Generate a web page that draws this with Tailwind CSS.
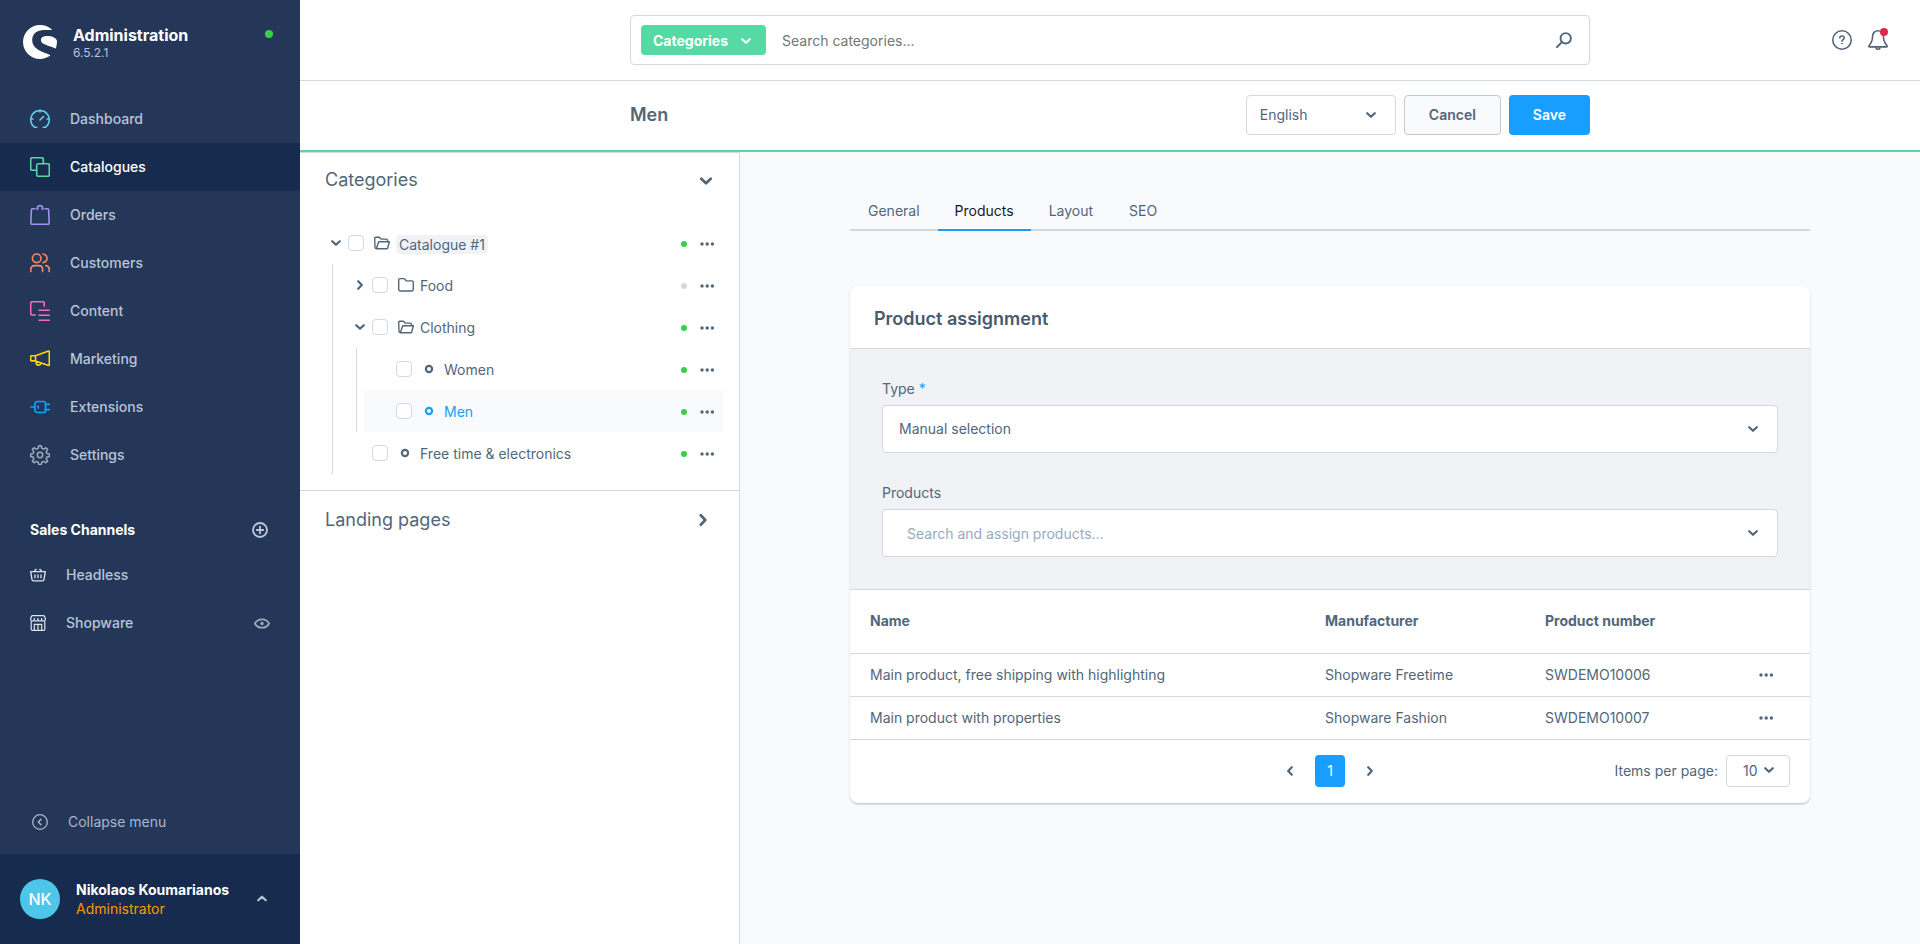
<!DOCTYPE html>
<html lang="en">
<head>
<meta charset="utf-8">
<meta name="viewport" content="width=device-width, initial-scale=1">
<title>Men | Categories | Administration</title>
<script src="https://cdn.jsdelivr.net/npm/@tailwindcss/browser@4"></script>
</head>
<body class="flex h-screen overflow-hidden bg-[#f9fafc] font-['Inter',sans-serif] text-sm text-[#52667a] antialiased">

<svg class="hidden" aria-hidden="true">
  <symbol id="chevron-down" viewBox="0 0 16 16"><path d="M4.200 6.200 8 9.800l3.800-3.600" fill="none" stroke="currentColor" stroke-width="2.200" stroke-linecap="round" stroke-linejoin="round"/></symbol>
  <symbol id="chevron-right" viewBox="0 0 16 16"><path d="M6.200 4.200 9.800 8l-3.600 3.800" fill="none" stroke="currentColor" stroke-width="2.200" stroke-linecap="round" stroke-linejoin="round"/></symbol>
  <symbol id="chevron-left" viewBox="0 0 16 16"><path d="M9.800 4.200 6.200 8l3.600 3.800" fill="none" stroke="currentColor" stroke-width="2.200" stroke-linecap="round" stroke-linejoin="round"/></symbol>
  <symbol id="chevron-up" viewBox="0 0 16 16"><path d="M4.200 9.300 8 5.700l3.800 3.600" fill="none" stroke="currentColor" stroke-width="2.200" stroke-linecap="round" stroke-linejoin="round"/></symbol>
  <symbol id="more" viewBox="0 0 16 16"><g fill="currentColor"><circle cx="3" cy="8" r="1.700"/><circle cx="8.200" cy="8" r="1.700"/><circle cx="13.400" cy="8" r="1.700"/></g></symbol>
  <symbol id="folder" viewBox="0 0 16 16"><path d="M.7 3v9.600c0 .8.600 1.400 1.400 1.400h11.800c.8 0 1.400-.6 1.400-1.400V5.300c0-.8-.6-1.400-1.400-1.400H8.200L6.400 1.600H2.100C1.300 1.600.7 2.200.7 3z" fill="none" stroke="currentColor" stroke-width="1.400" stroke-linejoin="round"/></symbol>
  <symbol id="folder-open" viewBox="0 0 16 16"><path d="M2.300 13.700 4.700 6.800h10.700l-1.700 6.200c-.1.400-.5.700-1 .7H2.300c-.8 0-1.200-.5-1.300-1.200L.7 3.300c0-.6.400-1 1-1h3.600l1.800 1.800h5.200c.7 0 1.200.5 1.200 1.200v1.500" fill="none" stroke="currentColor" stroke-width="1.400" stroke-linejoin="round"/></symbol>
  <symbol id="leaf" viewBox="0 0 16 16"><circle cx="7" cy="8" r="3.100" fill="none" stroke="currentColor" stroke-width="2.200"/></symbol>
</svg>

<aside class="flex w-[300px] shrink-0 flex-col bg-[#243758] text-[#b9c4d8]">
  <div class="flex items-start pt-[25px] pr-[27px] pl-[23px]">
    <svg class="size-[34px]" viewBox="0 0 34 34" fill="#fff" aria-hidden="true">
      <path d="M28.600 4.200C25.500 1.600 21.400 0 17 0 7.600 0 0 7.600 0 17s7.600 17 17 17c3.700 0 7.200-1.200 10-3.200.4-.3.300-.7-.1-.9-6.500-3-17.700-5.300-17.700-14.900C9.200 8.400 14.500 4.900 20.500 4.900c2.700 0 5.300.1 7.900 0 .4 0 .5-.4.200-.7z"/>
      <path d="M33.800 15.200c-1.400-2.600-5.200-4.100-9.600-4.100-4 0-6.300 1.600-6.300 4 0 5 8.400 5.200 14.200 8.300.4.200.6.100.8-.3.900-2.300 1.200-5.400.9-7.900z"/>
    </svg>
    <div class="ml-4 flex-1">
      <div class="text-base leading-5 font-bold text-white">Administration</div>
      <div class="text-xs leading-4">6.5.2.1</div>
    </div>
    <span class="mt-[5px] size-2 rounded-full bg-[#37d046]"></span>
  </div>

  <nav class="mt-[34px] font-medium">
    <a href="#" class="flex h-12 items-center gap-5 pl-[30px]">
      <svg class="size-5 text-[#64cfeb]" viewBox="0 0 20 20" fill="none" stroke="currentColor" stroke-width="1.600" stroke-linecap="round"><path d="M6.700 18.300H4.500A9.300 9.300 0 1 1 15.500 18.300H13.300M10 1v2M1 10h2M17 10h2M10 11l3.500-3.500"/></svg>
      Dashboard</a>
    <a href="#" aria-current="page" class="flex h-12 items-center gap-5 bg-[#172b4e] pl-[30px] text-white">
      <svg class="size-5 text-[#57d9a3]" viewBox="0 0 20 20" fill="none" stroke="currentColor" stroke-width="1.600" stroke-linejoin="round"><rect x="6.700" y="6.700" width="12.600" height="12.600" rx="1.500"/><path d="M6.700 13.300H2.200A1.500 1.500 0 0 1 .7 11.800V2.200A1.500 1.500 0 0 1 2.200.7h9.600a1.500 1.500 0 0 1 1.500 1.500v4.500"/></svg>
      Catalogues</a>
    <a href="#" class="flex h-12 items-center gap-5 pl-[30px]">
      <svg class="size-5 text-[#a092f0]" viewBox="0 0 20 20" fill="none" stroke="currentColor" stroke-width="1.600" stroke-linecap="round" stroke-linejoin="round"><path d="M5 3.700H2.600c-.7 0-1.200.5-1.200 1.100L.8 18c0 .7.500 1.300 1.200 1.300h16c.7 0 1.200-.6 1.200-1.300l-.6-13.200c0-.6-.5-1.100-1.200-1.100H15M7.300 4.500V3.200C7.300 1.700 8.400.7 10 .7s2.700 1 2.700 2.500v1.300M7.300 3.700H8M12 3.700h.7"/></svg>
      Orders</a>
    <a href="#" class="flex h-12 items-center gap-5 pl-[30px]">
      <svg class="size-5 text-[#f88962]" viewBox="0 0 20 20" fill="none" stroke="currentColor" stroke-width="1.600" stroke-linecap="round"><circle cx="6.700" cy="5.300" r="4.300"/><path d="M13 1c2.500.4 4 2.100 4 4.300s-1.500 3.900-4 4.300M.8 18.600v-2.300c0-2.200 1.500-3.700 3.700-3.700h4.400c2.200 0 3.700 1.500 3.700 3.700v2.300M15.800 12.600c2.100.3 3.400 1.700 3.400 3.700v2.300"/></svg>
      Customers</a>
    <a href="#" class="flex h-12 items-center gap-5 pl-[30px]">
      <svg class="size-5 text-[#ff68b4]" viewBox="0 0 20 20" fill="none" stroke="currentColor" stroke-width="1.600" stroke-linecap="round"><path d="M5.200 14H2.200A1.500 1.500 0 0 1 .7 12.500V2.200A1.500 1.500 0 0 1 2.200.7h10.500a1.500 1.500 0 0 1 1.500 1.500v2.900M9 9.200h10.300M9 14.200h10.300M9 19.200h10.300"/></svg>
      Content</a>
    <a href="#" class="flex h-12 items-center gap-5 pl-[30px]">
      <svg class="size-5 text-[#ffd700]" viewBox="0 0 20 20" fill="none" stroke="currentColor" stroke-width="1.600" stroke-linejoin="round"><path d="M5.500 6.700H1.500a.8.800 0 0 0-.8.800v3.600c0 .4.400.8.800.8h4zM5.500 6.700 18.500 2c.4-.1.800.1.800.6v13.300c0 .5-.4.700-.8.600L5.500 11.900M6.200 12.200v1.900c0 1.200.8 2 2.100 2h.5c1.100 0 1.900-.6 2.200-1.700"/></svg>
      Marketing</a>
    <a href="#" class="flex h-12 items-center gap-5 pl-[30px]">
      <svg class="size-5 text-[#189eff]" viewBox="0 0 20 20" fill="none" stroke="currentColor" stroke-width="1.700" stroke-linecap="round" stroke-linejoin="round"><path d="M.8 10h4M15.500 7.300h3.800M15.500 12.700h3.800M8 9v2"/><path d="M7.500 4.500h6.300c1 0 1.700.7 1.700 1.700v7.600c0 1-.7 1.700-1.700 1.700H7.500c-1.600 0-2.700-1.200-2.700-2.700V7.200c0-1.500 1.100-2.700 2.700-2.700z"/></svg>
      Extensions</a>
    <a href="#" class="flex h-12 items-center gap-5 pl-[30px]">
      <svg class="size-5 text-[#9aabbb]" viewBox="0 0 20 20" fill="none" stroke="currentColor" stroke-width="1.500" stroke-linejoin="round"><circle cx="10" cy="10" r="2.700"/><path d="M8.800.8h2.400l.6 2.500 1.900.8 2.200-1.400 1.700 1.700-1.400 2.200.8 1.900 2.400.6v2.300l-2.400.6-.8 1.900 1.400 2.200-1.700 1.700-2.200-1.400-1.900.8-.6 2.400H8.800l-.6-2.400-1.900-.8-2.200 1.400-1.700-1.700 1.400-2.200-.8-1.900-2.300-.6V9.100L3 8.500l.8-1.900-1.400-2.200 1.700-1.700 2.200 1.400 1.900-.8z"/></svg>
      Settings</a>
  </nav>

  <div class="mt-[33px] mb-[3px] flex h-9 items-center justify-between pr-8 pl-[30px]">
    <h2 class="font-bold text-white">Sales Channels</h2>
    <button type="button" aria-label="Add sales channel"><svg class="size-4" viewBox="0 0 16 16" fill="none" stroke="currentColor" stroke-width="1.900" stroke-linecap="round"><circle cx="8" cy="8" r="7"/><path d="M8 4.800v6.400M4.800 8h6.400"/></svg></button>
  </div>
  <nav class="font-medium">
    <a href="#" class="flex h-12 items-center gap-5 pl-[30px]">
      <svg class="size-4 text-[#dfe4ec]" viewBox="0 0 16 16" fill="none" stroke="currentColor" stroke-width="1.300" stroke-linecap="round" stroke-linejoin="round"><path d="M.7 4.700h14.600L14 12.600a1.400 1.400 0 0 1-1.400 1.200H3.400A1.400 1.400 0 0 1 2 12.600zM4.300 4.500c.2-1.300 1-1.900 1.900-2.200M11.700 4.500c-.2-1.300-1-1.900-1.900-2.200M5 8v2.800M8 8v2.800M11 8v2.800"/></svg>
      Headless</a>
    <div class="flex h-12 items-center justify-between pr-[30px]">
      <a href="#" class="flex items-center gap-5 pl-[30px]">
        <svg class="size-4 text-[#dfe4ec]" viewBox="0 0 16 16" fill="none" stroke="currentColor" stroke-width="1.200" stroke-linejoin="round"><path d="M1.200 6.500v7.700c0 .7.500 1.200 1.200 1.200h11.200c.7 0 1.200-.5 1.200-1.200V6.500M.6 4 1.400 1.500c.2-.6.600-.9 1.200-.9h10.800c.6 0 1 .3 1.200.9L15.400 4v.7a1.900 1.900 0 0 1-3.700 0 1.900 1.900 0 0 1-3.700 0 1.900 1.900 0 0 1-3.700 0 1.900 1.900 0 0 1-3.700 0zM4.300 15.200V9.300h7.400v5.900M8 9.300v5.900M4.300 3v1.500M8 3v1.500M11.700 3v1.500"/></svg>
        Shopware</a>
      <button type="button" aria-label="View storefront"><svg class="size-4 text-[#9aabbb]" viewBox="0 0 16 16" fill="none" stroke="currentColor" stroke-width="1.800"><path d="M.9 8.500C2.500 5.500 5 4.300 8 4.300s5.500 1.200 7.100 4.200C13.500 11.500 11 12.700 8 12.700S2.500 11.500.9 8.500z"/><circle cx="8" cy="8.500" r=".8" fill="currentColor"/></svg></button>
    </div>
  </nav>

  <button type="button" class="mt-auto mb-2 flex h-12 items-center gap-5 pl-8 text-[#a9b6cc]">
    <svg class="size-4" viewBox="0 0 16 16" fill="none" stroke="currentColor" stroke-width="1.300" stroke-linecap="round" stroke-linejoin="round"><circle cx="8" cy="8" r="7.300"/><path d="M9 5.300 6.300 8 9 10.700" stroke-width="1.500"/></svg>
    Collapse menu</button>
  <button type="button" class="flex h-[90px] items-center bg-[#172b4e] pr-[30px] pl-5 text-left">
    <span class="flex size-10 items-center justify-center rounded-full bg-[#4dc6e9] text-base font-medium text-white">NK</span>
    <span class="ml-4 flex-1 leading-[19px]"><span class="block font-bold text-white">Nikolaos Koumarianos</span><span class="block text-[#ff9800]">Administrator</span></span>
    <svg class="size-4"><use href="#chevron-up"/></svg>
  </button>
</aside>

<div class="flex min-w-0 flex-1 flex-col">
  <header class="bg-white">
    <div class="grid h-[81px] grid-cols-[1fr_minmax(0,960px)_1fr] items-center border-b border-[#d1d9e0]">
      <div></div>
      <div class="flex h-[50px] items-center rounded border border-[#d1d9e0] pr-[17px] pl-2.5">
        <button type="button" class="flex h-[30px] items-center gap-2.5 rounded bg-[#57d9a3] px-3 pt-0.5 font-bold text-white">Categories<svg class="size-4"><use href="#chevron-down"/></svg></button>
        <input type="search" aria-label="Search categories" placeholder="Search categories..." class="ml-4 min-w-0 flex-1 pt-0.5 outline-none placeholder:text-[#757575]">
        <button type="button" aria-label="Search"><svg class="size-4" viewBox="0 0 16 16" fill="none" stroke="currentColor" stroke-width="1.900" stroke-linecap="round"><circle cx="9.700" cy="6.300" r="5.200"/><path d="M5.900 10.100 1 15"/></svg></button>
      </div>
      <div class="flex justify-end gap-4 pr-8">
        <button type="button" aria-label="Help"><svg class="size-5" viewBox="0 0 20 20" fill="none" stroke="currentColor" stroke-width="1.600" stroke-linecap="round"><circle cx="10" cy="10" r="9.200"/><path d="M7.800 8c0-1.200.9-2 2.200-2s2.200.8 2.200 2c0 1.600-2.200 1.600-2.200 3.200"/><circle cx="10" cy="13.600" r=".4" fill="currentColor" stroke-width="1"/></svg></button>
        <button type="button" aria-label="Notifications" class="relative"><svg class="size-5" viewBox="0 0 20 20" fill="none" stroke="currentColor" stroke-width="1.600" stroke-linejoin="round"><path d="M10 .8c-3.300 0-5.400 2.300-5.400 5.500 0 4.800-1.200 6.600-3.600 9.400-.4.500-.2 1.200.5 1.200h17c.7 0 .9-.7.500-1.200-2.400-2.800-3.600-4.600-3.600-9.400 0-3.200-2.100-5.500-5.400-5.500z"/><path d="M8 17.200c0 1.200.9 2 2 2s2-.8 2-2"/></svg><span class="absolute -top-0.5 right-0 size-2 rounded-full bg-[#de294c]"></span></button>
      </div>
    </div>
    <div class="grid h-[71px] grid-cols-[minmax(0,960px)] items-start justify-center border-b-2 border-[#57d9a3] pt-3.5">
      <div class="flex items-center gap-2">
        <h1 class="flex-1 text-lg font-semibold">Men</h1>
        <div class="relative">
          <select aria-label="Language" class="h-10 w-[150px] appearance-none rounded border border-[#d1d9e0] bg-white px-[13px]"><option>English</option></select>
          <svg class="pointer-events-none absolute top-3 right-[17px] size-4"><use href="#chevron-down"/></svg>
        </div>
        <button type="button" class="h-10 rounded border border-[#c2cad6] bg-[#f9fafc] px-6 font-semibold">Cancel</button>
        <button type="button" class="h-10 rounded bg-[#189eff] px-6 font-semibold text-white">Save</button>
      </div>
    </div>
  </header>

  <div class="flex min-h-0 flex-1">
    <section class="w-[440px] shrink-0 border-t border-r border-[#d1d9e0] bg-white">
      <div class="border-b border-[#d1d9e0] pb-4">
        <div class="flex h-[69px] items-start justify-between pt-[13px] pr-[23px] pl-[25px]">
          <h2 class="text-lg leading-7">Categories</h2>
          <button type="button" aria-label="Collapse categories" class="mt-[5px]"><svg class="size-5"><use href="#chevron-down"/></svg></button>
        </div>
        <ul class="pr-4 pl-4">
          <li>
            <div class="flex h-[42px] items-center pr-2 pl-3">
              <button type="button" aria-label="Collapse Catalogue #1"><svg class="size-4"><use href="#chevron-down"/></svg></button>
              <input type="checkbox" aria-label="Select Catalogue #1" class="ml-1 size-4 appearance-none rounded border border-[#d1d9e0] bg-white">
              <svg class="ml-2.5 size-4"><use href="#folder-open"/></svg>
              <a href="#" class="mt-0.5 ml-1.5 rounded bg-[#f0f2f5] px-[3px] leading-[19px]">Catalogue #1</a>
              <span class="mt-0.5 ml-auto size-1.5 rounded-full bg-[#37d046]"></span>
              <button type="button" aria-label="Actions for Catalogue #1" class="mt-0.5 ml-3"><svg class="size-4"><use href="#more"/></svg></button>
            </div>
            <ul class="ml-4 border-l border-[#d1d9e0] pl-[7px]">
              <li class="flex h-[42px] items-center pr-2 pl-3">
                <button type="button" aria-label="Expand Food"><svg class="size-4"><use href="#chevron-right"/></svg></button>
                <input type="checkbox" aria-label="Select Food" class="ml-1 size-4 appearance-none rounded border border-[#d1d9e0] bg-white">
                <svg class="ml-2.5 size-4"><use href="#folder"/></svg>
                <a href="#" class="mt-0.5 ml-1.5">Food</a>
                <span class="mt-0.5 ml-auto size-1.5 rounded-full bg-[#d1d9e0]"></span>
                <button type="button" aria-label="Actions for Food" class="mt-0.5 ml-3"><svg class="size-4"><use href="#more"/></svg></button>
              </li>
              <li>
                <div class="flex h-[42px] items-center pr-2 pl-3">
                  <button type="button" aria-label="Collapse Clothing"><svg class="size-4"><use href="#chevron-down"/></svg></button>
                  <input type="checkbox" aria-label="Select Clothing" class="ml-1 size-4 appearance-none rounded border border-[#d1d9e0] bg-white">
                  <svg class="ml-2.5 size-4"><use href="#folder-open"/></svg>
                  <a href="#" class="mt-0.5 ml-1.5">Clothing</a>
                  <span class="mt-0.5 ml-auto size-1.5 rounded-full bg-[#37d046]"></span>
                  <button type="button" aria-label="Actions for Clothing" class="mt-0.5 ml-3"><svg class="size-4"><use href="#more"/></svg></button>
                </div>
                <ul class="ml-4 border-l border-[#d1d9e0] pl-[7px]">
                  <li class="flex h-[42px] items-center pr-2 pl-8">
                    <input type="checkbox" aria-label="Select Women" class="size-4 appearance-none rounded border border-[#d1d9e0] bg-white">
                    <svg class="ml-2.5 size-4"><use href="#leaf"/></svg>
                    <a href="#" class="mt-0.5 ml-1.5">Women</a>
                    <span class="mt-0.5 ml-auto size-1.5 rounded-full bg-[#37d046]"></span>
                    <button type="button" aria-label="Actions for Women" class="mt-0.5 ml-3"><svg class="size-4"><use href="#more"/></svg></button>
                  </li>
                  <li class="flex h-[42px] items-center rounded bg-[#f9fafc] pr-2 pl-8">
                    <input type="checkbox" aria-label="Select Men" class="size-4 appearance-none rounded border border-[#d1d9e0] bg-white">
                    <svg class="ml-2.5 size-4 text-[#189eff]"><use href="#leaf"/></svg>
                    <a href="#" class="mt-0.5 ml-1.5 text-[#189eff]">Men</a>
                    <span class="mt-0.5 ml-auto size-1.5 rounded-full bg-[#37d046]"></span>
                    <button type="button" aria-label="Actions for Men" class="mt-0.5 ml-3"><svg class="size-4"><use href="#more"/></svg></button>
                  </li>
                </ul>
              </li>
              <li class="flex h-[42px] items-center pr-2 pl-8">
                <input type="checkbox" aria-label="Select Free time &amp; electronics" class="size-4 appearance-none rounded border border-[#d1d9e0] bg-white">
                <svg class="ml-2.5 size-4"><use href="#leaf"/></svg>
                <a href="#" class="mt-0.5 ml-1.5">Free time &amp; electronics</a>
                <span class="mt-0.5 ml-auto size-1.5 rounded-full bg-[#37d046]"></span>
                <button type="button" aria-label="Actions for Free time &amp; electronics" class="mt-0.5 ml-3"><svg class="size-4"><use href="#more"/></svg></button>
              </li>
            </ul>
          </li>
        </ul>
      </div>
      <div class="flex h-14 items-center justify-between pt-0.5 pr-[26px] pl-[25px]">
        <h2 class="text-lg leading-7">Landing pages</h2>
        <button type="button" aria-label="Expand landing pages"><svg class="size-5"><use href="#chevron-right"/></svg></button>
      </div>
    </section>

    <main class="min-w-0 flex-1 overflow-hidden px-10 pt-10">
      <div class="mx-auto max-w-[960px]">
        <nav class="flex h-[39px] border-b-2 border-[#d1d9e0] leading-[38px]">
          <a href="#" class="px-[18px]">General</a>
          <a href="#" aria-current="page" class="h-[39px] border-b-2 border-[#189eff] px-[17px] text-[#17191c]">Products</a>
          <a href="#" class="px-[18px]">Layout</a>
          <a href="#" class="px-[18px]">SEO</a>
        </nav>

        <section class="mt-[55px] overflow-hidden rounded-lg bg-white shadow-[0_1px_1px_rgba(0,0,0,0.08),0_2px_1px_rgba(0,0,0,0.06),0_1px_3px_rgba(0,0,0,0.1)]">
          <div class="flex h-[63px] items-center border-b border-[#d1d9e0] px-6 pt-1">
            <h2 class="text-lg font-semibold text-[#475a6e]">Product assignment</h2>
          </div>
          <div class="flex flex-col gap-8 border-b border-[#d1d9e0] bg-[#f0f2f5] p-8">
            <div class="flex flex-col gap-2">
              <label for="type" class="leading-4">Type <span class="text-[#189eff]">*</span></label>
              <div class="relative">
                <select id="type" class="block h-12 w-full appearance-none rounded border border-[#d1d9e0] bg-white px-4"><option>Manual selection</option></select>
                <svg class="pointer-events-none absolute top-4 right-[17px] size-4"><use href="#chevron-down"/></svg>
              </div>
            </div>
            <div class="flex flex-col gap-2">
              <label for="products" class="leading-4">Products</label>
              <div class="relative">
                <input id="products" type="text" placeholder="Search and assign products..." class="block h-12 w-full rounded border border-[#d1d9e0] bg-white px-6 placeholder:text-[#98abbe]">
                <svg class="pointer-events-none absolute top-4 right-[17px] size-4"><use href="#chevron-down"/></svg>
              </div>
            </div>
          </div>
          <table class="w-full table-fixed text-left">
            <colgroup><col><col class="w-[220px]"><col class="w-[197px]"><col class="w-[88px]"></colgroup>
            <thead>
              <tr class="h-[63px] border-b border-[#d1d9e0]">
                <th class="px-5 font-bold">Name</th><th class="px-5 font-bold">Manufacturer</th><th class="px-5 font-bold">Product number</th><th></th>
              </tr>
            </thead>
            <tbody>
              <tr class="h-[43px] border-b border-[#d1d9e0]">
                <td class="px-5">Main product, free shipping with highlighting</td><td class="px-5">Shopware Freetime</td><td class="px-5">SWDEMO10006</td>
                <td><button type="button" aria-label="Actions for SWDEMO10006" class="mx-auto block"><svg class="size-4"><use href="#more"/></svg></button></td>
              </tr>
              <tr class="h-[43px] border-b border-[#d1d9e0]">
                <td class="px-5">Main product with properties</td><td class="px-5">Shopware Fashion</td><td class="px-5">SWDEMO10007</td>
                <td><button type="button" aria-label="Actions for SWDEMO10007" class="mx-auto block"><svg class="size-4"><use href="#more"/></svg></button></td>
              </tr>
            </tbody>
          </table>
          <div class="grid h-[63px] grid-cols-[1fr_auto_1fr] items-center px-5">
            <div></div>
            <div class="flex items-center gap-[13px]">
              <button type="button" aria-label="Previous page" class="px-1"><svg class="size-4"><use href="#chevron-left"/></svg></button>
              <button type="button" aria-current="page" class="h-8 w-[30px] rounded bg-[#189eff] text-white">1</button>
              <button type="button" aria-label="Next page" class="px-1"><svg class="size-4"><use href="#chevron-right"/></svg></button>
            </div>
            <div class="flex items-center justify-end gap-2">
              <label for="per-page">Items per page:</label>
              <div class="relative">
                <select id="per-page" class="block h-8 w-16 appearance-none rounded border border-[#d1d9e0] bg-white pl-4"><option>10</option></select>
                <svg class="pointer-events-none absolute top-[7px] right-[13px] size-4"><use href="#chevron-down"/></svg>
              </div>
            </div>
          </div>
        </section>
      </div>
    </main>
  </div>
</div>
</body>
</html>
